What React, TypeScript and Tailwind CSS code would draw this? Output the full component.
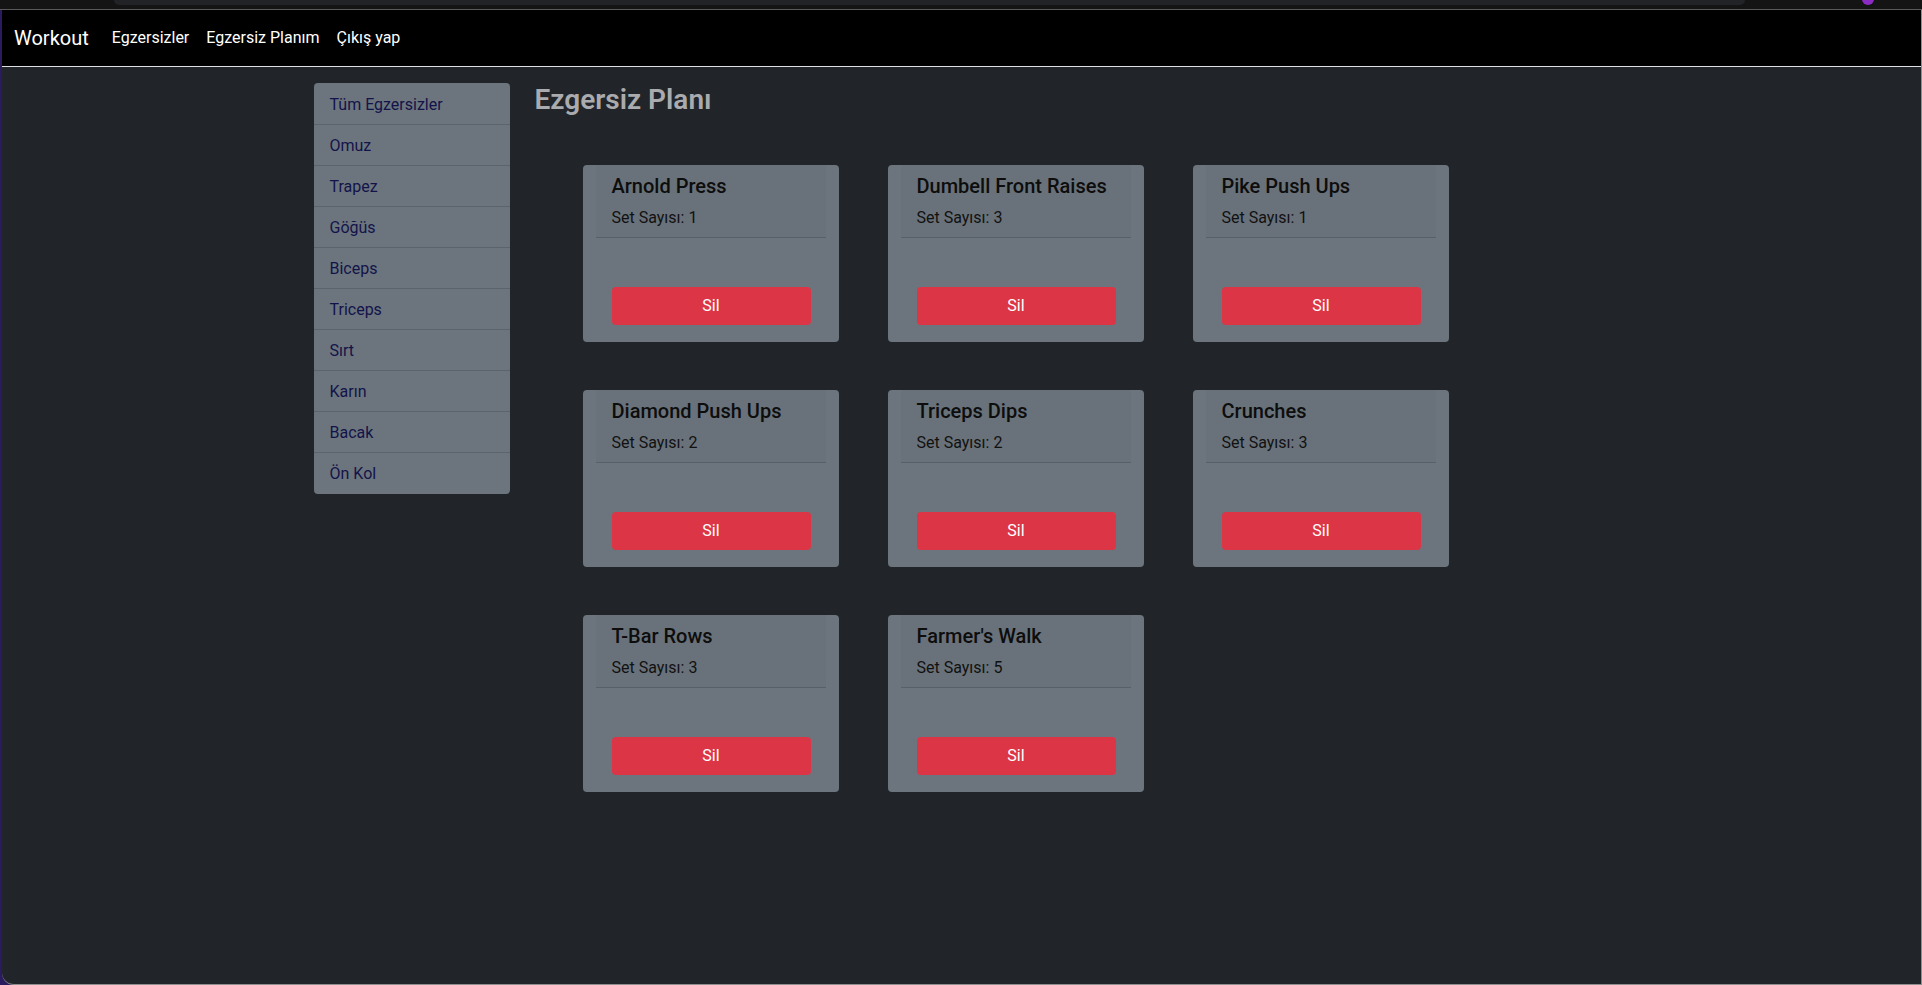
import React from "react";

const categories = [
  "Tüm Egzersizler",
  "Omuz",
  "Trapez",
  "Göğüs",
  "Biceps",
  "Triceps",
  "Sırt",
  "Karın",
  "Bacak",
  "Ön Kol",
];

const plan = [
  { name: "Arnold Press", sets: 1 },
  { name: "Dumbell Front Raises", sets: 3 },
  { name: "Pike Push Ups", sets: 1 },
  { name: "Diamond Push Ups", sets: 2 },
  { name: "Triceps Dips", sets: 2 },
  { name: "Crunches", sets: 3 },
  { name: "T-Bar Rows", sets: 3 },
  { name: "Farmer's Walk", sets: 5 },
];

function Card({ name, sets }: { name: string; sets: number }) {
  return (
    <div className="w-[256px] h-[177px] bg-[#6c757d] rounded-[4px] flex flex-col">
      <div className="mx-[13px] px-[16px] pt-[9px] pb-[7px] bg-[#69727a] border-b border-[#595f66]">
        <div className="text-[20px] leading-[24px] font-medium text-[#0d0d0d] whitespace-nowrap">{name}</div>
        <div className="mt-[8px] text-[16px] leading-[24px] text-[#111]">Set Sayısı: {sets}</div>
      </div>
      <div className="flex-1 flex items-end pl-[29px] pr-[28px] pb-[17px]">
        <button className="w-full h-[38px] rounded-[4px] bg-[#dc3545] text-white text-[16px] leading-[24px]">
          Sil
        </button>
      </div>
    </div>
  );
}

export default function App() {
  return (
    <div
      className="w-[1922px] h-[985px] bg-[#2a1a5e] flex flex-col overflow-hidden"
      style={{ fontFamily: "Roboto, 'Noto Sans', 'Liberation Sans', sans-serif" }}
    >
      {/* browser chrome strip */}
      <div className="relative h-[9px] bg-[#141414] shrink-0">
        <div className="absolute left-[114px] top-0 w-[1631px] h-[5px] bg-[#222327] rounded-bl-[6px] rounded-br-[6px]" />
        <div className="absolute left-[1862px] top-[-7px] w-[12px] h-[12px] rounded-full bg-[#8a2bc4]" />
      </div>
      <div className="h-[1px] bg-[#5a5a5a] shrink-0" />
      <div className="flex-1 ml-[2px] bg-[#212529] border-r border-b border-[#8f8f8f] rounded-bl-[12px] flex flex-col overflow-hidden">
        {/* navbar */}
        <nav className="h-[57px] bg-black border-b border-[#dee2e6] flex items-center shrink-0">
          <span className="ml-[12px] text-[20px] text-white">Workout</span>
          <div className="ml-[23px] flex gap-[17px] text-[16px] text-white">
            <span>Egzersizler</span>
            <span>Egzersiz Planım</span>
            <span>Çıkış yap</span>
          </div>
        </nav>

        {/* content */}
        <div className="w-[1320px] mx-auto flex pt-[16px]">
          <div className="w-[220px] px-[12px]">
            <div className="bg-[#6c757d] rounded-[4px] overflow-hidden py-[1px]">
              {categories.map((c, i) => (
                <div
                  key={c}
                  className={`px-[16px] pt-[9px] pb-[7px] text-[16px] leading-[24px] text-[#13134a] ${
                    i > 0 ? "border-t border-[#5c636a]" : ""
                  }`}
                >
                  {c}
                </div>
              ))}
            </div>
          </div>
          <div className="flex-1 px-[12px]">
            <h3 className="ml-[1px] text-[28px] leading-[34px] font-semibold text-[#a9abae]">Ezgersiz Planı</h3>
            <div className="mt-[48px] ml-[49px] grid grid-cols-[256px_256px_256px] gap-x-[49px] gap-y-[48px]">
              {plan.map((p) => (
                <Card key={p.name} name={p.name} sets={p.sets} />
              ))}
            </div>
          </div>
        </div>
      </div>
    </div>
  );
}
